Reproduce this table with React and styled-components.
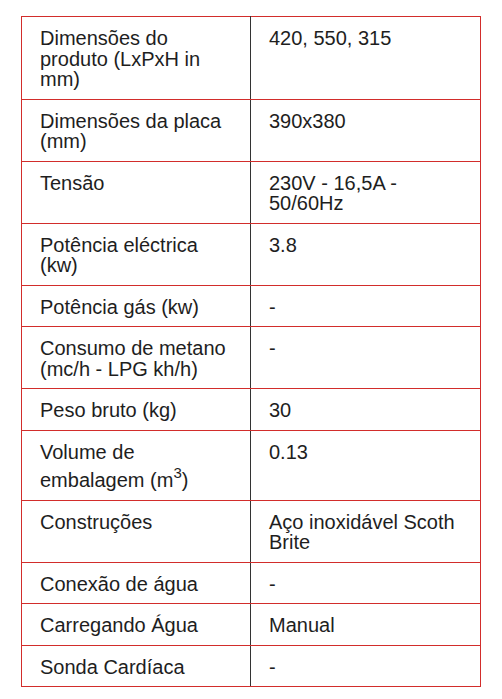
import React from "react";
import styled, { createGlobalStyle } from "styled-components";

const GlobalStyle = createGlobalStyle`
  body {
    margin: 0;
    background: #ffffff;
    font-family: "Liberation Sans", Arial, Helvetica, sans-serif;
  }
`;

const Page = styled.div`
  padding: 16px 21px 0 21px;
  display: flex;
  flex-direction: column;
`;

const SpecTable = styled.table`
  width: 460px;
  border-collapse: collapse;
  table-layout: fixed;
  color: #1e1e1e;
  font-size: 20px;
  line-height: 20.5px;
`;

const Cell = styled.td`
  box-sizing: border-box;
  border: 1px solid #d22d2b;
  padding: 11px 8px 9px 18px;
  vertical-align: top;
  white-space: nowrap;
  overflow: hidden;
`;

const LabelCell = styled(Cell)`
  width: 229px;
  border-right: 1px solid #333333;
`;

const ValueCell = styled(Cell)`
  border-left: 1px solid #333333;
`;

const Sup = styled.sup`
  font-size: 15px;
  line-height: 0;
  vertical-align: 9px;
`;

const Footer = styled.div`
  display: flex;
  justify-content: flex-end;
  padding: 12px 1px 0 0;
`;

const GhostButton = styled.div`
  width: 42px;
  height: 28px;
  border: 1px solid #e2e2e2;
  border-radius: 6px;
`;

const specs = [
  { label: ["Dimensões do", "produto (LxPxH in", "mm)"], value: ["420, 550, 315"] },
  { label: ["Dimensões da placa", "(mm)"], value: ["390x380"] },
  { label: ["Tensão"], value: ["230V - 16,5A -", "50/60Hz"] },
  { label: ["Potência eléctrica", "(kw)"], value: ["3.8"] },
  { label: ["Potência gás (kw)"], value: ["-"] },
  { label: ["Consumo de metano", "(mc/h - LPG kh/h)"], value: ["-"] },
  { label: ["Peso bruto (kg)"], value: ["30"] },
  {
    label: [
      "Volume de",
      <>
        embalagem (m<Sup>3</Sup>)
      </>,
    ],
    value: ["0.13"],
    tall: true,
  },
  { label: ["Construções"], value: ["Aço inoxidável Scoth", "Brite"] },
  { label: ["Conexão de água"], value: ["-"] },
  { label: ["Carregando Água"], value: ["Manual"] },
  { label: ["Sonda Cardíaca"], value: ["-"] },
];

const Lines = ({ lines, tall }) =>
  lines.map((line, i) => (
    <React.Fragment key={i}>
      {i > 0 && <br />}
      {tall && i > 0 ? <TallLine>{line}</TallLine> : line}
    </React.Fragment>
  ));

const TallLine = styled.span`
  display: inline-block;
  padding-top: 8px;
`;

export default function App() {
  return (
    <>
      <GlobalStyle />
      <Page>
        <SpecTable>
          <tbody>
            {specs.map((row, i) => (
              <tr key={i}>
                <LabelCell>
                  <Lines lines={row.label} tall={row.tall} />
                </LabelCell>
                <ValueCell>
                  <Lines lines={row.value} />
                </ValueCell>
              </tr>
            ))}
          </tbody>
        </SpecTable>
        <Footer>
          <GhostButton />
        </Footer>
      </Page>
    </>
  );
}
